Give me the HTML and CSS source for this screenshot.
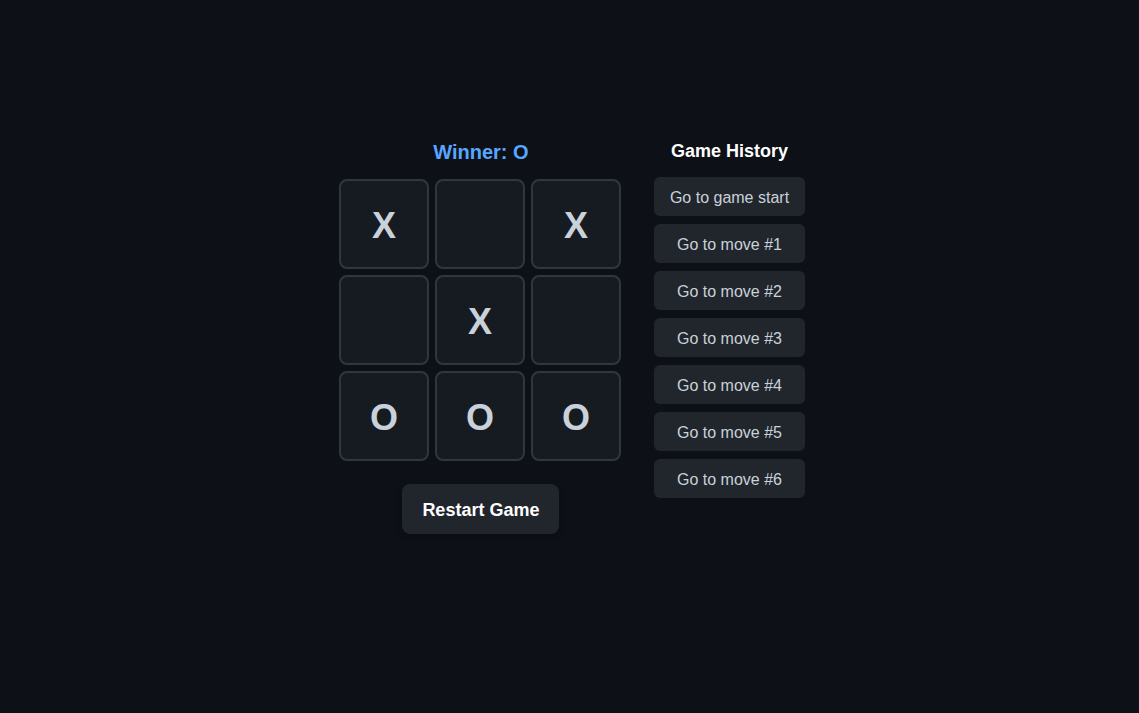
FILE: index.html
```html
<!DOCTYPE html>
<html>
<head>
<meta charset="utf-8">
<link rel="stylesheet" href="styles.css">
</head>
<body>
<main class="app">
  <section class="game">
    <div class="status">Winner: O</div>
    <div class="board">
      <button class="cell">X</button>
      <button class="cell"></button>
      <button class="cell">X</button>
      <button class="cell"></button>
      <button class="cell">X</button>
      <button class="cell"></button>
      <button class="cell">O</button>
      <button class="cell">O</button>
      <button class="cell">O</button>
    </div>
    <button class="restart">Restart Game</button>
  </section>
  <aside class="history">
    <h2 class="history-title">Game History</h2>
    <ol class="moves">
      <li><button class="move">Go to game start</button></li>
      <li><button class="move">Go to move #1</button></li>
      <li><button class="move">Go to move #2</button></li>
      <li><button class="move">Go to move #3</button></li>
      <li><button class="move">Go to move #4</button></li>
      <li><button class="move">Go to move #5</button></li>
      <li><button class="move">Go to move #6</button></li>
    </ol>
  </aside>
</main>
</body>
</html>
```
FILE: styles.css
```css
html, body {
  margin: 0;
  padding: 0;
  background: #0d1117;
  font-family: "Liberation Sans", Arial, sans-serif;
  color: #c9d1d9;
  height: 100%;
}
.app {
  display: flex;
  justify-content: center;
  align-items: flex-start;
  gap: 33px;
  padding: 140px 0 0 5px;
}
.game {
  display: flex;
  flex-direction: column;
  align-items: center;
}
.status {
  font-size: 20px;
  line-height: 24px;
  font-weight: bold;
  color: #58a6ff;
  margin: 0 0 15px 2px;
}
.board {
  display: grid;
  grid-template-columns: repeat(3, 90px);
  grid-template-rows: repeat(3, 90px);
  gap: 6px;
}
.cell {
  box-sizing: border-box;
  width: 90px;
  height: 90px;
  background: #161b22;
  border: 2px solid #30363d;
  border-radius: 8px;
  color: #c9d1d9;
  font-family: "Liberation Sans", Arial, sans-serif;
  font-size: 36px;
  font-weight: bold;
  padding: 3px 0 0;
  display: flex;
  align-items: center;
  justify-content: center;
}
.restart {
  margin: 23px 0 0 2px;
  background: #21262d;
  color: #ffffff;
  border: none;
  border-radius: 8px;
  font-family: "Liberation Sans", Arial, sans-serif;
  font-size: 18px;
  line-height: 22px;
  font-weight: bold;
  padding: 15px 20px 13px;
  box-shadow: 0 2px 6px rgba(0,0,0,0.3);
}
.history {
  display: flex;
  flex-direction: column;
  align-items: stretch;
}
.history-title {
  margin: 0 0 15px;
  text-align: center;
  font-size: 18px;
  line-height: 22px;
  font-weight: bold;
  color: #ffffff;
}
.moves {
  list-style: none;
  margin: 0;
  padding: 0;
  display: flex;
  flex-direction: column;
  gap: 8px;
}
.move {
  width: 100%;
  background: #21262d;
  color: #c9d1d9;
  border: none;
  border-radius: 6px;
  font-family: "Liberation Sans", Arial, sans-serif;
  font-size: 16px;
  line-height: 19px;
  padding: 11px 16px 9px;
}
```
